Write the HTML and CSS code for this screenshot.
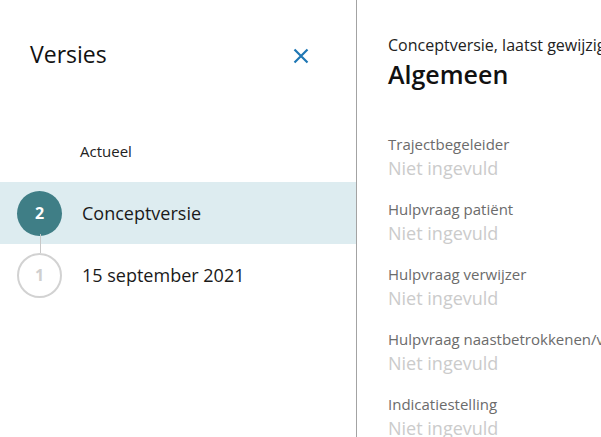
FILE: index.html
```html
<!DOCTYPE html>
<html lang="nl">
<head>
<meta charset="utf-8">
<title>Versies</title>
<link rel="stylesheet" href="styles.css">
</head>
<body>
<div class="layout">
  <aside class="versions">
    <header class="versions-header">
      <h1 class="versions-title">Versies</h1>
      <button class="close-btn" aria-label="Sluiten">
        <svg width="16" height="16" viewBox="0 0 16 16"><path d="M1.5 1.5 L14.5 14.5 M14.5 1.5 L1.5 14.5" stroke="#1f77b4" stroke-width="2.2" fill="none"/></svg>
      </button>
    </header>
    <div class="section-label">Actueel</div>
    <ul class="version-list">
      <li class="version-row active">
        <span class="badge badge-current">2</span>
        <span class="version-name">Conceptversie</span>
      </li>
      <li class="version-row">
        <span class="badge badge-old">1</span>
        <span class="version-name">15 september 2021</span>
      </li>
    </ul>
  </aside>
  <main class="detail">
    <div class="detail-sub">Conceptversie, laatst gewijzigd door J. de Vries</div>
    <h2 class="detail-title">Algemeen</h2>
    <dl class="fields">
      <div class="field"><dt>Trajectbegeleider</dt><dd>Niet ingevuld</dd></div>
      <div class="field"><dt>Hulpvraag patiënt</dt><dd>Niet ingevuld</dd></div>
      <div class="field"><dt>Hulpvraag verwijzer</dt><dd>Niet ingevuld</dd></div>
      <div class="field"><dt>Hulpvraag naastbetrokkenen/verwanten</dt><dd>Niet ingevuld</dd></div>
      <div class="field"><dt>Indicatiestelling</dt><dd>Niet ingevuld</dd></div>
    </dl>
  </main>
</div>
</body>
</html>
```
FILE: styles.css
```css
* { box-sizing: border-box; }
html, body {
  margin: 0;
  padding: 0;
  height: 100%;
  overflow: hidden;
  background: #fff;
}
body {
  font-family: "Open Sans", "Noto Sans", sans-serif;
  color: #1a1a1a;
}
.layout {
  display: flex;
  height: 437px;
}
.versions {
  flex: 0 0 357px;
  border-right: 1px solid #a3a3a3;
}
.versions-header {
  display: flex;
  justify-content: space-between;
  align-items: flex-start;
  padding: 39px 0 0 30px;
}
.versions-title {
  margin: 0;
  font-size: 23px;
  font-weight: 400;
  line-height: 30px;
  color: #111;
}
.close-btn {
  margin: 9px 47px 0 0;
  padding: 0;
  width: 16px;
  height: 16px;
  border: 0;
  background: none;
  display: flex;
}
.section-label {
  margin-top: 72px;
  padding-left: 80px;
  font-size: 15px;
  line-height: 20px;
  color: #222;
}
.version-list {
  list-style: none;
  margin: 21px 0 0;
  padding: 0;
}
.version-row {
  display: flex;
  align-items: center;
  gap: 20px;
  height: 62px;
  padding-left: 17px;
}
.version-row.active {
  background: #ddecf0;
}
.badge {
  position: relative;
  flex: 0 0 45px;
  height: 45px;
  border-radius: 50%;
  display: flex;
  align-items: center;
  justify-content: center;
  font-size: 16px;
  font-weight: 700;
}
.badge-current {
  background: #3f7e86;
  color: #fff;
}
.badge-old {
  border: 2px solid #d2d2d2;
  color: #cfcfcf;
}
.badge-old::before {
  content: "";
  position: absolute;
  left: 20.5px;
  top: -21px;
  width: 1px;
  height: 19px;
  background: #c8c8c8;
}
.version-name {
  font-size: 18px;
  line-height: 25px;
  color: #1a1a1a;
}
.detail {
  flex: 1;
  min-width: 0;
  padding: 34px 0 0 31px;
  white-space: nowrap;
  overflow: hidden;
}
.detail-sub {
  font-size: 16px;
  line-height: 22px;
  color: #222;
}
.detail-title {
  margin: 1px 0 0;
  font-size: 25px;
  font-weight: 600;
  line-height: 34px;
  color: #111;
}
.fields {
  margin: 43px 0 0;
  display: flex;
  flex-direction: column;
  gap: 18px;
}
.field dt {
  font-size: 15px;
  line-height: 20px;
  color: #6b6b6b;
  margin-bottom: 2px;
}
.field dd {
  margin: 0;
  font-size: 18px;
  line-height: 25px;
  color: #cbcbcb;
}
```
